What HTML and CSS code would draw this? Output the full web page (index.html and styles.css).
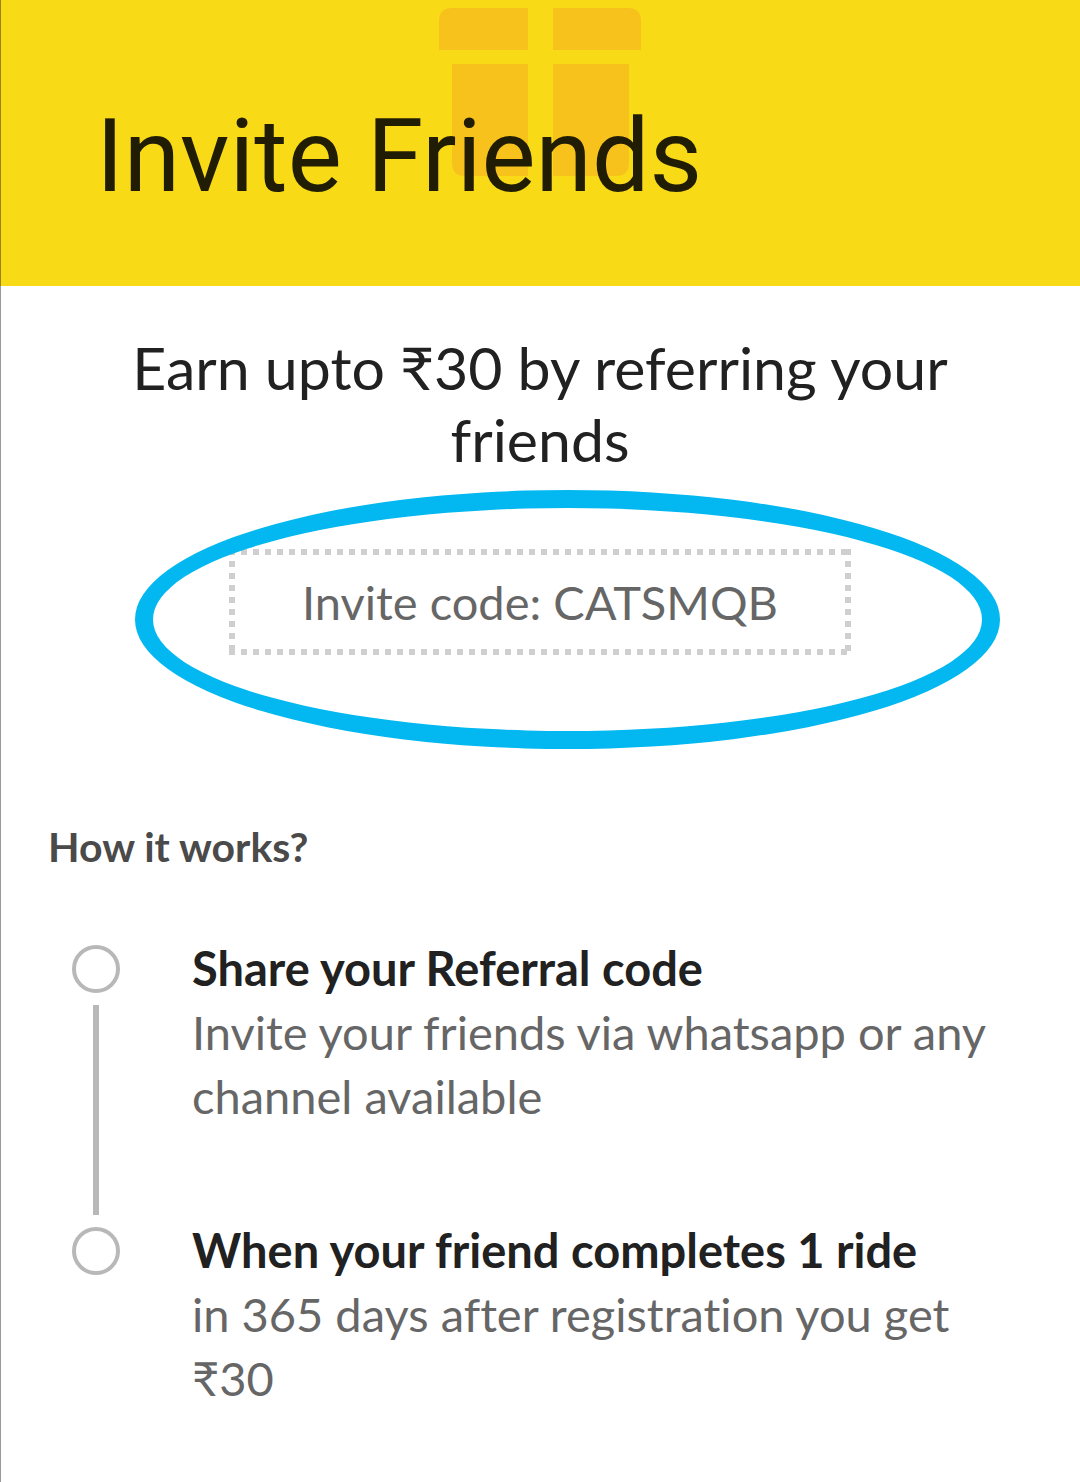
FILE: index.html
```
<!DOCTYPE html>
<html lang="en">
<head>
    <meta charset="UTF-8">
    <meta name="viewport" content="width=device-width, initial-scale=1.0">
    <title>Invite Friends</title>
    <link rel="stylesheet" href="styles.css">
</head>
<body>
    <header class="header">
        <svg class="gift" viewBox="0 0 202 168" aria-hidden="true">
            <path d="M0 42V13Q0 0 13 0H89V42Z"/>
            <path d="M114 0H189Q202 0 202 13V42H114Z"/>
            <path d="M13 56H89V168H26Q13 168 13 155Z"/>
            <path d="M114 56H190V155Q190 168 177 168H114Z"/>
        </svg>
        <h1 class="title">Invite Friends</h1>
    </header>

    <main>
        <section class="offer">
            <h2 class="offer-text">Earn upto ₹30 by referring your friends</h2>
            <div class="code">
                Invite code: CATSMQB
                <span class="highlight"></span>
            </div>
        </section>

        <section class="how">
            <h3 class="how-title">How it works?</h3>
            <ol class="steps">
                <li class="step">
                    <div class="marker">
                        <span class="circle"></span>
                        <span class="line"></span>
                    </div>
                    <div class="step-body">
                        <h4 class="step-title">Share your Referral code</h4>
                        <p class="step-text">Invite your friends via whatsapp or any channel available</p>
                    </div>
                </li>
                <li class="step">
                    <div class="marker">
                        <span class="circle"></span>
                    </div>
                    <div class="step-body">
                        <h4 class="step-title">When your friend completes 1 ride</h4>
                        <p class="step-text">in 365 days after registration you get ₹30</p>
                    </div>
                </li>
            </ol>
        </section>
    </main>
</body>
</html>
```
FILE: styles.css
```
* {
    box-sizing: border-box;
}
body {
    position: relative;
    margin: 0;
    min-height: 100vh;
    background-color: #fff;
    color: #212121;
    font-family: Lato, "Noto Sans", sans-serif;
    font-variant-ligatures: none;
}
/* Thin edge along the left side */
body::before {
    content: "";
    position: absolute;
    top: 0;
    bottom: 0;
    left: 0;
    z-index: 1;
    width: 1px;
    background-color: rgba(0, 0, 0, 0.4);
}
h1, h2, h3, h4, p, ol {
    margin: 0;
    padding: 0;
}

/* Header */
.header {
    position: relative;
    padding: 97px 48px 71px 96px;
    background-color: #f8da17;
}
.gift {
    position: absolute;
    top: 8px;
    left: 0;
    right: 0;
    width: 202px;
    margin: 0 auto;
    fill: #f8c21c;
}
.title {
    position: relative;
    color: #211d04;
    font-family: Roboto, sans-serif;
    font-size: 102px;
    font-weight: 400;
    line-height: 118px;
}

/* Offer */
.offer {
    display: flex;
    flex-direction: column;
    align-items: center;
    padding: 46px 96px 0;
    text-align: center;
}
.offer-text {
    font-size: 59px;
    font-weight: 400;
    line-height: 72px;
}
.code {
    position: relative;
    width: 100%;
    max-width: 622px;
    margin-top: 73px;
    padding: 21px 24px;
    color: #666;
    font-size: 47px;
    line-height: 64px;
    background:
        repeating-linear-gradient(90deg, #cfcfcf 0 6px, transparent 6px 12px) top / 100% 6px no-repeat,
        repeating-linear-gradient(90deg, #cfcfcf 0 6px, transparent 6px 12px) bottom / 100% 6px no-repeat,
        repeating-linear-gradient(#cfcfcf 0 6px, transparent 6px 12px) left / 6px 100% no-repeat,
        repeating-linear-gradient(#cfcfcf 0 6px, transparent 6px 12px) right / 6px 100% no-repeat;
}
/* Ring drawn around the code */
.highlight {
    position: absolute;
    top: -59px;
    right: -149px;
    bottom: -94px;
    left: -94px;
    border: 18px solid #03b8f0;
    border-radius: 50%;
}

/* How it works */
.how {
    padding: 160px 48px 48px;
}
.how-title {
    color: #4a4a4a;
    font-size: 41px;
    font-weight: 700;
    line-height: 64px;
}
.steps {
    margin-top: 57px;
    list-style: none;
}
.step {
    display: flex;
    gap: 72px;
    padding-left: 24px;
}
.marker {
    display: flex;
    flex-direction: column;
    align-items: center;
    gap: 12px;
    padding: 9px 0 3px;
}
.circle {
    width: 48px;
    height: 48px;
    border: 4px solid #b8b8b8;
    border-radius: 50%;
}
.line {
    flex: 1;
    width: 6px;
    background-color: #b8b8b8;
}
.step-body {
    flex: 1;
    padding-bottom: 90px;
}
.step:last-child .step-body {
    padding-bottom: 0;
}
.step-title {
    font-size: 47px;
    font-weight: 700;
    line-height: 64px;
}
.step-text {
    color: #666;
    font-size: 47px;
    line-height: 64px;
}
```
